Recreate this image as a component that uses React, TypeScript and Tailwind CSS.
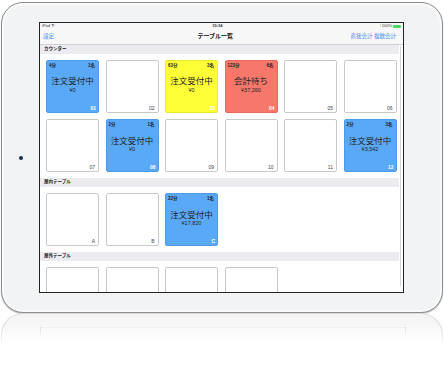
import React from "react";

type Tile = {
  no: string;
  color?: "blue" | "yellow" | "red";
  time?: string;
  people?: string;
  status?: string;
  price?: string;
};

const sections: { title: string; tiles: Tile[] }[] = [
  {
    title: "カウンター",
    tiles: [
      { no: "01", color: "blue", time: "4分", people: "1名", status: "注文受付中", price: "¥0" },
      { no: "02" },
      { no: "03", color: "yellow", time: "63分", people: "3名", status: "注文受付中", price: "¥0" },
      { no: "04", color: "red", time: "123分", people: "6名", status: "会計待ち", price: "¥37,260" },
      { no: "05" },
      { no: "06" },
      { no: "07" },
      { no: "08", color: "blue", time: "2分", people: "1名", status: "注文受付中", price: "¥0" },
      { no: "09" },
      { no: "10" },
      { no: "11" },
      { no: "12", color: "blue", time: "2分", people: "3名", status: "注文受付中", price: "¥3,542" },
    ],
  },
  {
    title: "屋内テーブル",
    tiles: [
      { no: "A" },
      { no: "B" },
      { no: "C", color: "blue", time: "22分", people: "1名", status: "注文受付中", price: "¥17,820" },
    ],
  },
  {
    title: "屋外テーブル",
    tiles: [{ no: "" }, { no: "" }, { no: "" }, { no: "" }],
  },
];

const bg = {
  blue: "bg-[#5aa9f6] border-[#4d9be8]",
  yellow: "bg-[#ffff38] border-[#eaea2a]",
  red: "bg-[#f7776b] border-[#e8685d]",
};

function TableTile({ t }: { t: Tile }) {
  if (!t.color) {
    return (
      <div className="relative h-[53px] w-[53px] rounded-[2px] border-[1.5px] border-[#c9c9c9] bg-white">
        <span className="absolute bottom-[1px] right-[3px] text-[5px] leading-none text-[#444]">{t.no}</span>
      </div>
    );
  }
  return (
    <div className={`flex h-[53px] w-[53px] flex-col rounded-[2px] border ${bg[t.color]} text-[#222]`}>
      <div className="flex justify-between px-[2px] pt-[3px] text-[4.5px] font-bold leading-none">
        <span>{t.time}</span>
        <span className="pr-[1px]">{t.people}</span>
      </div>
      <div className="mt-[9px] text-center text-[8.5px] leading-none">{t.status}</div>
      <div className="mt-[2px] text-center text-[5.5px] leading-none">{t.price}</div>
      <div className="mt-auto pb-[1px] pr-[2px] text-right text-[5px] font-bold leading-none text-white">{t.no}</div>
    </div>
  );
}

export default function App() {
  return (
    <div
      className="h-[367px] w-[445px] overflow-hidden bg-white"
      style={{ fontFamily: '"Liberation Sans", "Noto Sans CJK JP", sans-serif' }}
    >
      {/* iPad body */}
      <div className="relative ml-[1px] mt-[2px] h-[311px] w-[442px] rounded-[22px] border-[1.5px] border-[#8c8c8c] bg-[#f2f3f5] pl-[37px] pt-[18.5px] shadow-[inset_0_0_0_2px_#fafafa,0_1px_1px_#bbb]">
        <span className="absolute left-[17px] top-[153px] h-[4px] w-[4px] rounded-full bg-[#1d2b45]" />

        {/* screen */}
        <div className="relative h-[271px] w-[365px] overflow-hidden border border-[#222] bg-white">
          {/* status bar */}
          <div className="flex h-[7px] items-center justify-between bg-[#f7f7f7] px-[2px] text-[4px] leading-none text-[#333]">
            <span>iPad ᯤ</span>
            <span className="font-bold">15:34</span>
            <span className="flex items-center gap-[1px]">
              <span>⁝ 100%</span>
              <span className="h-[3px] w-[8px] rounded-[1px] bg-[#4cd964]" />
            </span>
          </div>
          {/* nav bar */}
          <div className="flex h-[15px] items-center justify-between border-b border-[#d2d2d6] bg-[#f7f7f7] px-[3px]">
            <span className="text-[5.5px] text-[#3b8ff0]">設定</span>
            <span className="pl-[26px] text-[6px] font-bold text-[#111]">テーブル一覧</span>
            <span className="pr-[4px] text-[5.5px] text-[#3b8ff0]">直接会計 複数会計</span>
          </div>

          <div className="pr-[4px]">
            {sections.map((s) => (
              <div key={s.title}>
                <div className="flex h-[9px] items-center bg-[#ebebf0] pl-[4px] text-[4.5px] font-bold text-[#222]">
                  {s.title}
                </div>
                <div className="grid grid-cols-[repeat(6,53px)] gap-[6.5px] px-[6px] py-[6px]">
                  {s.tiles.map((t, i) => (
                    <TableTile key={s.title + i} t={t} />
                  ))}
                </div>
              </div>
            ))}
          </div>
          <span className="absolute right-[2px] top-[23px] h-[240px] w-[1px] bg-[#d6d6d6]" />
        </div>
      </div>

      {/* reflection */}
      <div className="relative ml-[1px] h-[32px] w-[442px] overflow-hidden">
        <div className="h-[40px] rounded-t-[22px] border-x border-t border-[#dcdcdc] bg-gradient-to-b from-[#f4f4f6] to-white" />
        <span className="absolute left-[39px] top-[14px] h-[16px] w-[1px] bg-gradient-to-b from-[#d8d8d8] to-white" />
        <span className="absolute left-[404px] top-[14px] h-[16px] w-[1px] bg-gradient-to-b from-[#d8d8d8] to-white" />
        <span className="absolute left-[40px] top-[14px] h-[1px] w-[364px] bg-[#f0f0f0]" />
        <div className="absolute inset-x-0 bottom-0 h-[18px] bg-gradient-to-b from-transparent to-white" />
      </div>
    </div>
  );
}
